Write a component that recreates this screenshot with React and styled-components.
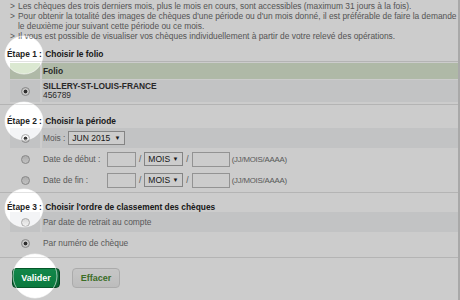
import styled, { createGlobalStyle } from "styled-components";

const GlobalStyle = createGlobalStyle`
  html, body {
    margin: 0;
    padding: 0;
    background: #fff;
  }
  body {
    font-family: "Liberation Sans", Arial, sans-serif;
  }
`;

const spots = [
  { x: 24, y: 55, r: 19 },
  { x: 24, y: 121, r: 19 },
  { x: 24, y: 208, r: 19 },
  { x: 35, y: 276, r: 22 },
];

export default function App() {
  return (
    <Root>
      <GlobalStyle />
      <Frame>
        <Intro>
          <li>Les chèques des trois derniers mois, plus le mois en cours, sont accessibles (maximum 31 jours à la fois).</li>
          <li>
            Pour obtenir la totalité des images de chèques d'une période ou d'un mois donné, il est préférable de faire la demande
            le deuxième jour suivant cette période ou ce mois.
          </li>
          <li>Il vous est possible de visualiser vos chèques individuellement à partir de votre relevé des opérations.</li>
        </Intro>

        <Step $top={6}>
          <Title>
            Étape 1 : <span>Choisir le folio</span>
          </Title>
          <Table>
            <Row $head>
              <Cell />
              <Cell>Folio</Cell>
            </Row>
            <Row $shade $tall>
              <Cell $center>
                <Radio $checked />
              </Cell>
              <Cell>
                <Strong>SILLERY-ST-LOUIS-FRANCE</Strong>
                <span>456789</span>
              </Cell>
            </Row>
          </Table>
        </Step>

        <Step $top={9}>
          <Title>
            Étape 2 : <span>Choisir la période</span>
          </Title>
          <Rows>
            <Row $shade>
              <Cell $center>
                <Radio $checked />
              </Cell>
              <Line>
                Mois :
                <Select $w={57}>
                  JUN 2015 <Arrow>▼</Arrow>
                </Select>
              </Line>
            </Row>
            <DateRow label="Date de début :" />
            <DateRow label="Date de fin :" />
          </Rows>
        </Step>

        <Step $top={7} $last>
          <Title $short>
            Étape 3 : <span>Choisir l'ordre de classement des chèques</span>
          </Title>
          <Rows>
            <Row $shade>
              <Cell $center>
                <Radio />
              </Cell>
              <Line>Par date de retrait au compte</Line>
            </Row>
            <Row>
              <Cell $center>
                <Radio $checked />
              </Cell>
              <Line>Par numéro de chèque</Line>
            </Row>
          </Rows>
        </Step>

        <Actions>
          <Primary>Valider</Primary>
          <Secondary>Effacer</Secondary>
        </Actions>
      </Frame>

      <Spotlight viewBox="0 0 460 300" width="460" height="300">
        <defs>
          <mask id="holes">
            <rect width="460" height="300" fill="#fff" />
            {spots.map((s, i) => (
              <circle key={i} cx={s.x} cy={s.y} r={s.r} fill="#000" />
            ))}
          </mask>
        </defs>
        <rect width="460" height="300" fill="rgba(0,0,0,0.2)" mask="url(#holes)" />
        {spots.map((s, i) => (
          <circle key={i} cx={s.x} cy={s.y} r={s.r} fill="none" stroke="rgba(255,255,255,0.6)" strokeWidth="1" />
        ))}
      </Spotlight>
    </Root>
  );
}

function DateRow({ label }) {
  return (
    <Row>
      <Cell $center>
        <Radio />
      </Cell>
      <Line>
        <Label>{label}</Label>
        <Input $w={29} />
        <Slash>/</Slash>
        <Select $w={39}>
          MOIS <Arrow>▼</Arrow>
        </Select>
        <Slash>/</Slash>
        <Input $w={38} />
        <Hint>(JJ/MOIS/AAAA)</Hint>
      </Line>
    </Row>
  );
}

const Root = styled.div`
  position: relative;
  width: 460px;
  height: 300px;
  overflow: hidden;
`;

const Frame = styled.div`
  box-sizing: border-box;
  width: 460px;
  height: 300px;
  border-right: 2px solid #d4d4d4;
  font-size: 8.4px;
  color: #6b6b6b;
`;

const Intro = styled.ul`
  list-style: none;
  margin: 0;
  padding: 1px 0 0 10px;
  line-height: 10px;

  li {
    padding-left: 8px;
    text-indent: -8px;
  }

  li::before {
    content: ">";
    display: inline-block;
    width: 8px;
    text-indent: 0;
  }
`;

const Step = styled.section`
  margin-top: ${(p) => p.$top}px;
  padding: 0 0 ${(p) => (p.$last ? 4 : 2)}px 10px;
  border-bottom: 1px solid #e2e2e2;
`;

const Title = styled.div`
  margin-left: -3px;
  height: ${(p) => (p.$short ? 12 : 14)}px;
  line-height: 14px;
  font-weight: bold;
  color: #222;

  span {
    margin-left: 1px;
  }
`;

const Table = styled.div`
  border-top: 1px solid #e2e2e2;
  padding-top: 1px;
  display: flex;
  flex-direction: column;
  gap: 1px;
`;

const Rows = styled.div`
  display: flex;
  flex-direction: column;
  gap: 1px;
`;

const Row = styled.div`
  display: grid;
  grid-template-columns: 30px 1fr;
  column-gap: 2px;
  height: ${(p) => (p.$head ? 16 : p.$tall ? 22 : 20)}px;
  font-weight: ${(p) => (p.$head ? "bold" : "normal")};
  color: ${(p) => (p.$head ? "#222" : "inherit")};

  & > * {
    background: ${(p) => (p.$head ? "#dbe8d1" : p.$shade ? "#f3f4f6" : "transparent")};
  }
`;

const Cell = styled.div`
  display: flex;
  flex-direction: column;
  justify-content: center;
  align-items: ${(p) => (p.$center ? "center" : "flex-start")};
  padding-left: ${(p) => (p.$center ? 0 : 1)}px;
  line-height: 9px;
  color: #333;
`;

const Strong = styled.span`
  font-weight: bold;
`;

const Line = styled.div`
  display: flex;
  align-items: center;
  gap: 3px;
  padding-left: 1px;
  color: #707070;
`;

const Label = styled.span`
  width: 61px;
`;

const Radio = styled.span`
  box-sizing: border-box;
  width: 9px;
  height: 9px;
  border-radius: 50%;
  border: 1px solid #a9a9a9;
  background: ${(p) =>
    p.$checked
      ? "radial-gradient(circle, #3a3a3a 0 1.6px, #f6f6f6 2.2px)"
      : "linear-gradient(#d9d9d9, #f2f2f2)"};
`;

const Select = styled.span`
  box-sizing: border-box;
  width: ${(p) => p.$w}px;
  height: 14px;
  display: inline-flex;
  align-items: center;
  justify-content: space-between;
  padding: 0 4px 0 3px;
  border: 1px solid #a5a5a5;
  background: #fff;
  color: #222;
  font-size: 8.5px;
`;

const Arrow = styled.span`
  font-size: 6px;
  color: #222;
`;

const Input = styled.span`
  box-sizing: border-box;
  width: ${(p) => p.$w}px;
  height: 15px;
  border: 1px solid #b8b8b8;
  background: #fff;
`;

const Slash = styled.span`
  color: #707070;
`;

const Hint = styled.span`
  margin-left: -1px;
  font-size: 7.8px;
  letter-spacing: -0.2px;
  color: #707070;
`;

const Actions = styled.div`
  display: flex;
  gap: 12px;
  padding: 10px 0 0 12px;
`;

const Button = styled.button`
  box-sizing: border-box;
  width: 48px;
  height: 20px;
  padding: 0;
  border-radius: 4px;
  font-family: inherit;
  font-size: 9px;
  font-weight: bold;
`;

const Primary = styled(Button)`
  border: 1px solid #06582a;
  background: linear-gradient(#12874a, #0a7a3e);
  color: #fff;
`;

const Secondary = styled(Button)`
  border: 1px solid #d6d6d6;
  background: linear-gradient(#f8f8f8, #ececec);
  color: #4c8a30;
`;

const Spotlight = styled.svg`
  position: absolute;
  top: 0;
  left: 0;
  pointer-events: none;
`;
